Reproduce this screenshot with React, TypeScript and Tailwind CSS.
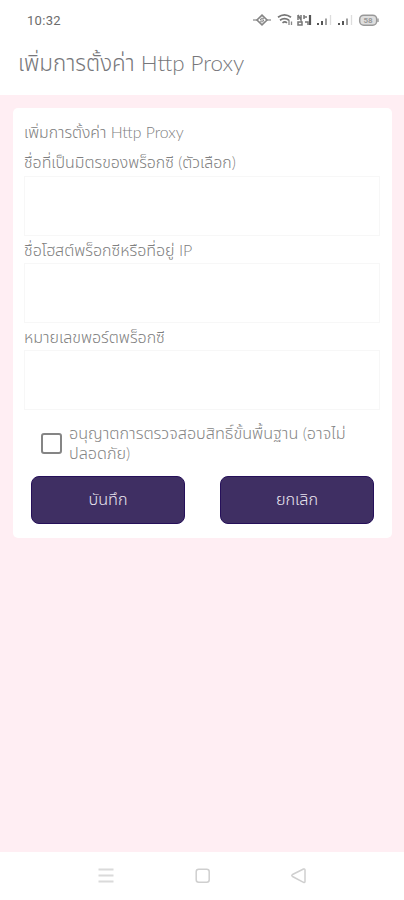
import type { ReactNode } from "react";

function StatusIcons() {
  return (
    <div className="flex h-4 items-center">
      <svg width="130" height="16" viewBox="0 0 130 16" fill="none">
        {/* Assistant diamond */}
        <path d="M1 8h4M15 8h4" stroke="#a0a0a0" strokeWidth="1.6" />
        <path d="M10 3.2 15 8l-5 4.8L5 8z" stroke="#858585" strokeWidth="1.6" />
        <path d="M12 6.3H9.2L8.3 8h3.5l-.9 1.8H8" stroke="#858585" strokeWidth="1" />
        {/* Wi-Fi */}
        <path d="M26 5.2c4-3 9-3 13 0M28 8.2c3-2.200 6-2.200 9 0M30.500 10.800c1.500-1.200 3-1.200 4.500 0" stroke="#777" strokeWidth="1.7" />
        <path d="M37 8v5M39.500 9.500V13" stroke="#888" strokeWidth="1.300" />
        {/* Network speed */}
        <path d="M46 3v5M46 3l3 5V3M52 3v4M52 5h3M46 10h4v3h-4zM53 10h3v3" stroke="#777" strokeWidth="1.500" />
        <path d="M58 3v10" stroke="#555" strokeWidth="2.200" />
        {/* Signal bars */}
        <path d="M66 11v2M70 9v4" stroke="#555" strokeWidth="2" />
        <path d="M74 6.500V13" stroke="#888" strokeWidth="1.600" />
        <path d="M78.500 3v10" stroke="#ddd" strokeWidth="1.300" />
        <path d="M87 11v2M91 9v4" stroke="#555" strokeWidth="2" />
        <path d="M95 6.500V13" stroke="#888" strokeWidth="1.600" />
        <path d="M99.500 3v10" stroke="#ddd" strokeWidth="1.300" />
        {/* Battery */}
        <rect x="107.700" y="3.200" width="17" height="10" rx="4" fill="#dedede" stroke="#999" strokeWidth="1.500" />
        <path d="M126 6.500v3.500" stroke="#999" strokeWidth="1.400" />
        <text x="111.500" y="11" fontSize="8" fontWeight="700" fill="#999" fontFamily="Roboto, sans-serif">58</text>
      </svg>
    </div>
  );
}

function Label({ className, children }: { className: string; children: ReactNode }) {
  return <div className={`flex items-center whitespace-nowrap text-[#808080] ${className}`}><span>{children}</span></div>;
}

function Field({ className = "" }: { className?: string }) {
  return <input className={`block w-full border border-[#f7f7f7] bg-white outline-none ${className}`} />;
}

function Action({ children }: { children: ReactNode }) {
  return (
    <button className="flex h-[48px] w-[154px] items-center justify-center rounded-[8px] border border-[#26105a] bg-[#3f2f63] pb-[2px] text-[16.200px] text-[#e9e4ef]">
      {children}
    </button>
  );
}

export default function App() {
  return (
    <div className="flex h-[900px] w-[404px] flex-col overflow-hidden bg-[#ffeef3] font-['Lato','Noto_Sans_Thai',sans-serif] font-light">
      <header className="h-[95px] shrink-0 bg-white">
        <div className="flex h-10 items-center justify-between pl-[27px] pr-[22px]">
          <span className="pt-px font-['Roboto',sans-serif] text-[13px] font-normal tracking-[0.300px] text-[#6c6c6c]">10:32</span>
          <StatusIcons />
        </div>
        <h1 className="flex h-[45px] items-center whitespace-nowrap pl-[18px] text-[22.400px] font-light text-[#77777b]">
          <span>เพิ่มการตั้งค่า Http Proxy</span>
        </h1>
      </header>

      <main className="flex-1 px-[13px] pt-[13px]">
        <section className="h-[430px] w-[379px] rounded-[5px] bg-white pl-[11px] pr-[12px] pt-[9px]">
          <Label className="h-[30px] text-[15.800px]">เพิ่มการตั้งค่า Http Proxy</Label>
          <Label className="h-[29px] text-[15.900px]">ชื่อที่เป็นมิตรของพร็อกซี (ตัวเลือก)</Label>
          <Field className="h-[60px]" />
          <Label className="h-[27px] text-[16px]">ชื่อโฮสต์พร็อกซีหรือที่อยู่ IP</Label>
          <Field className="h-[60px]" />
          <Label className="h-[27px] text-[16px]">หมายเลขพอร์ตพร็อกซี</Label>
          <Field className="h-[60px]" />
          <div className="flex h-[66px] items-center pl-[17px]">
            <span className="h-[21px] w-[21px] shrink-0 rounded-[3px] border-2 border-[#858585]" />
            <div className="ml-[7px] whitespace-nowrap text-[16.200px] leading-[20px] text-[#858585]">
              <div>อนุญาตการตรวจสอบสิทธิ์ขั้นพื้นฐาน (อาจไม่</div>
              <div>ปลอดภัย)</div>
            </div>
          </div>
          <div className="flex justify-between pl-[7px] pr-[6px]">
            <Action>บันทึก</Action>
            <Action>ยกเลิก</Action>
          </div>
        </section>
      </main>

      <nav className="flex h-[48px] shrink-0 justify-center bg-white">
        <svg width="404" height="48" fill="none" stroke="#cfcfcf" strokeWidth="1.500">
          <path d="M98.500 17.500h15M98.500 23.500h15M98.500 29.500h15" stroke="#dadada" strokeWidth="1.800" />
          <rect x="196.200" y="17.200" width="13" height="13" rx="2.500" />
          <path d="M292.500 22.500 303.500 17q1.500-.5 1.500 1v11.500q0 1.500-1.500.8L292.500 24.500q-1.500-1 0-2z" />
        </svg>
      </nav>
    </div>
  );
}
